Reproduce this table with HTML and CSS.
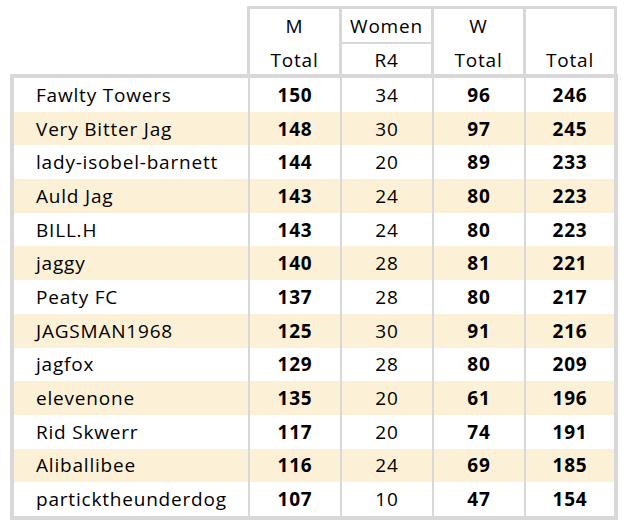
FILE: index.html
```html
<!DOCTYPE html>
<html>
<head>
<meta charset="utf-8">
<link rel="stylesheet" href="styles.css">
</head>
<body>
<div class="sheet">
  <div class="head">
    <div class="hcell span"><div class="top">M</div><div class="bot">Total</div></div>
    <div class="hcell women-top">Women</div>
    <div class="hcell span"><div class="top">W</div><div class="bot">Total</div></div>
    <div class="hcell span"><div class="top"></div><div class="bot">Total</div></div>
    <div class="hcell women-bot">R4</div>
  </div>
  <div class="body">
    <div class="row"><div class="name">Fawlty Towers</div><div class="b">150</div><div>34</div><div class="b">96</div><div class="b">246</div></div>
    <div class="row alt"><div class="name">Very Bitter Jag</div><div class="b">148</div><div>30</div><div class="b">97</div><div class="b">245</div></div>
    <div class="row"><div class="name">lady-isobel-barnett</div><div class="b">144</div><div>20</div><div class="b">89</div><div class="b">233</div></div>
    <div class="row alt"><div class="name">Auld Jag</div><div class="b">143</div><div>24</div><div class="b">80</div><div class="b">223</div></div>
    <div class="row"><div class="name">BILL.H</div><div class="b">143</div><div>24</div><div class="b">80</div><div class="b">223</div></div>
    <div class="row alt"><div class="name">jaggy</div><div class="b">140</div><div>28</div><div class="b">81</div><div class="b">221</div></div>
    <div class="row"><div class="name">Peaty FC</div><div class="b">137</div><div>28</div><div class="b">80</div><div class="b">217</div></div>
    <div class="row alt"><div class="name">JAGSMAN1968</div><div class="b">125</div><div>30</div><div class="b">91</div><div class="b">216</div></div>
    <div class="row"><div class="name">jagfox</div><div class="b">129</div><div>28</div><div class="b">80</div><div class="b">209</div></div>
    <div class="row alt"><div class="name">elevenone</div><div class="b">135</div><div>20</div><div class="b">61</div><div class="b">196</div></div>
    <div class="row"><div class="name">Rid Skwerr</div><div class="b">117</div><div>20</div><div class="b">74</div><div class="b">191</div></div>
    <div class="row alt"><div class="name">Aliballibee</div><div class="b">116</div><div>24</div><div class="b">69</div><div class="b">185</div></div>
    <div class="row"><div class="name">particktheunderdog</div><div class="b">107</div><div>10</div><div class="b">47</div><div class="b">154</div></div>
  </div>
</div>
</body>
</html>
```

FILE: styles.css
```css
html, body {
  margin: 0;
  padding: 0;
  background: #ffffff;
}
body {
  font-family: "Open Sans", Lato, "Liberation Sans", sans-serif;
  font-size: 19px;
  letter-spacing: 0.8px;
  color: #000;
}
.sheet {
  padding: 6px 0 0 10px;
  width: 608px;
}
.head {
  margin-left: 237px;
  width: 364px;
  display: grid;
  grid-template-columns: 89px 89px 89px 88px;
  grid-template-rows: 33px 30px;
  column-gap: 3px;
  row-gap: 2px;
  background: #d8d8d8;
  padding: 3px 3px 0 3px;
}
.hcell {
  background: #fff;
  display: flex;
  align-items: center;
  justify-content: center;
}
.hcell.span {
  grid-row: span 2;
  flex-direction: column;
  align-items: stretch;
  justify-content: flex-start;
}
.hcell .top {
  height: 33px;
  display: flex;
  align-items: center;
  justify-content: center;
}
.hcell .bot {
  height: 32px;
  padding-top: 3px;
  box-sizing: border-box;
  display: flex;
  align-items: center;
  justify-content: center;
}
.women-top { grid-column: 2; grid-row: 1; }
.women-bot {
  grid-column: 2;
  grid-row: 2;
  padding-top: 1px;
}
.body {
  border: 4px solid #d8d8d8;
  background: #d8d8d8;
  display: flex;
  flex-direction: column;
}
.row {
  display: grid;
  grid-template-columns: 234px 90px 90px 90px 88px;
  column-gap: 2px;
  height: 33.7px;
}
.row > div {
  background: #fff;
  display: flex;
  align-items: center;
  justify-content: center;
}
.row.alt > div {
  background: #fcf1d6;
}
.row > .name {
  justify-content: flex-start;
  padding-left: 22px;
}
.b {
  font-weight: 700;
}
```
